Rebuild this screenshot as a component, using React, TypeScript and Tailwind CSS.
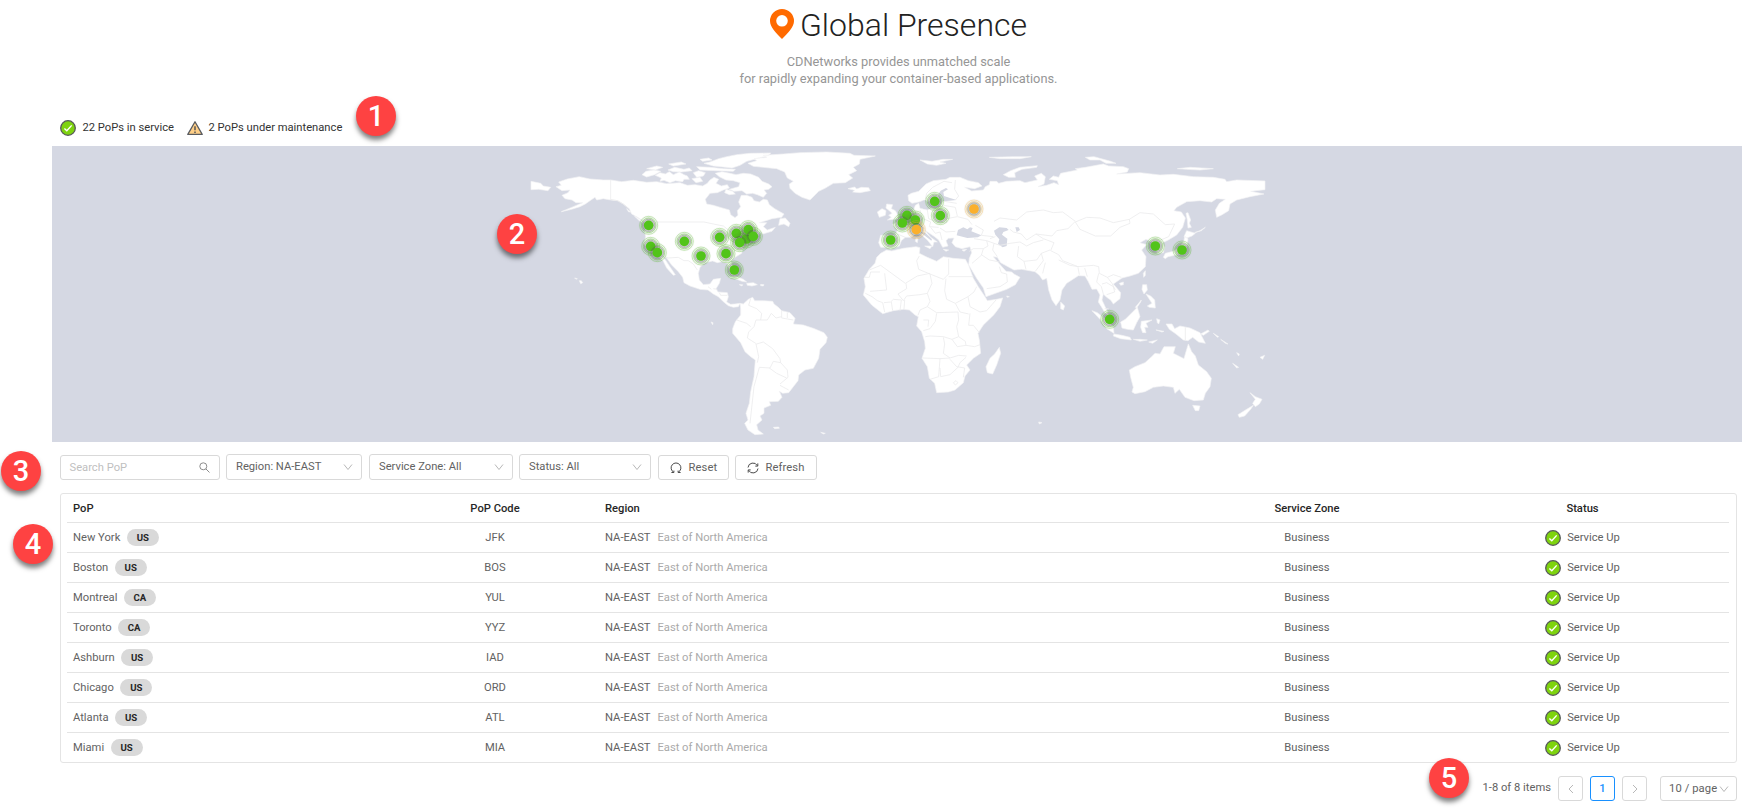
import type { ReactNode } from "react";

type Point = [number, number];

const pops = [
  { name: "New York", country: "US", code: "JFK" },
  { name: "Boston", country: "US", code: "BOS" },
  { name: "Montreal", country: "CA", code: "YUL" },
  { name: "Toronto", country: "CA", code: "YYZ" },
  { name: "Ashburn", country: "US", code: "IAD" },
  { name: "Chicago", country: "US", code: "ORD" },
  { name: "Atlanta", country: "US", code: "ATL" },
  { name: "Miami", country: "US", code: "MIA" },
];

/* Western hemisphere outlines */
const westLand = [
  "M228 140 244 136 236 126 262 117 298 110 330 117 370 120 392 120 425 125 460 121 500 127 530 125 560 131 600 128 622 136 645 134 668 138 682 130 690 120 702 112 716 118 708 130 724 138 742 134 748 144 730 150 712 158 690 160 676 178 680 192 700 196 724 203 748 210 752 224 765 233 774 226 772 212 782 200 776 186 784 166 800 166 816 172 822 182 838 186 850 178 862 180 868 194 884 206 912 222 905 232 876 236 858 242 838 248 860 248 850 260 862 270 886 262 876 274 848 282 840 274 832 290 812 300 800 318 788 326 785 340 765 352 752 365 762 385 766 400 757 406 748 390 742 370 725 365 712 368 698 363 675 368 660 382 655 400 658 420 670 434 690 432 700 418 722 415 718 430 708 446 714 456 742 458 745 470 740 486 752 493 765 492 780 490 775 500 760 502 745 497 730 485 715 470 700 462 684 450 660 448 630 438 612 428 608 412 595 395 575 375 560 354 550 350 568 378 586 404 580 406 560 384 550 364 535 346 515 338 500 325 492 310 497 290 494 275 500 252 482 238 470 230 455 222 448 206 430 192 414 182 392 180 370 176 350 180 345 172 330 182 316 192 300 200 275 208 244 215 280 200 308 188 288 188 276 180 255 176 246 166 264 158 270 150 246 152Z",
  "M804 70 830 62 822 56 860 52 850 46 910 42 960 38 1040 36 1110 40 1122 46 1186 48 1140 58 1138 72 1120 82 1130 92 1106 104 1118 114 1096 128 1060 130 1035 145 1016 154 1006 164 990 180 966 172 945 160 930 145 928 132 940 124 922 114 914 96 890 86 850 82 820 79Z",
  "M690 66 716 56 740 50 770 44 810 40 872 39 866 46 830 56 800 64 780 76 756 84 722 80 700 78 672 70Z",
  "M706 100 726 95 750 100 768 104 790 100 812 102 836 112 846 124 866 132 876 140 866 148 852 150 860 160 850 172 832 164 818 160 800 162 786 152 762 154 748 148 776 140 780 128 760 122 738 120 718 110Z",
  "M526 106 540 98 556 102 568 95 580 104 598 96 612 104 622 108 628 118 612 118 608 125 586 122 570 128 552 121 540 124 544 114Z",
  "M486 104 498 94 522 90 542 94 524 104 500 111Z",
  "M500 86 530 78 548 82 526 90Z",
  "M564 90 584 82 612 88 628 84 636 92 604 96 580 95Z",
  "M566 72 604 66 618 72 580 78Z",
  "M640 98 656 92 676 98 670 108 650 112Z M636 116 660 112 668 124 648 128Z",
  "M650 80 690 82 730 86 766 88 760 94 710 92 660 90Z",
  "M660 58 686 54 696 60 668 64Z",
  "M738 148 758 154 766 162 748 164 734 158Z",
  "M1104 146 1124 141 1130 147 1144 142 1166 143 1171 152 1140 158 1118 156 1124 151Z",
  "M153 124 182 130 190 138 212 142 204 152 176 148 153 149Z",
  "M900 236 916 234 930 250 926 260 912 252 896 256Z",
  "M748 412 766 408 790 418 800 426 786 424 766 416Z M800 430 820 428 832 434 816 438 802 436Z M778 434 788 434 786 438Z M842 433 852 434 850 438 842 437Z",
  "M463 228 480 238 490 248 478 242Z M440 206 452 216 446 216Z",
  "M780 490 790 492 805 478 818 472 824 482 850 482 878 484 882 492 895 502 905 512 930 518 945 535 940 552 970 555 1000 565 1032 578 1042 592 1038 608 1020 628 1016 655 1000 685 975 690 956 705 954 722 940 740 926 758 908 760 898 754 906 772 895 784 868 785 872 796 852 804 852 820 840 828 846 840 830 854 834 870 850 882 825 884 804 870 794 850 804 840 798 820 808 790 812 755 822 710 826 660 812 650 795 635 782 608 758 580 758 566 766 545 782 525 782 505Z",
  "M298 422 304 422 308 428 302 431Z M284 414 292 416 288 418Z M880 862 896 861 898 865 884 866Z M1022 877 1036 880 1030 882Z M693 546 699 548 698 554Z",
];

const westBorders = [
  "M392 120V180M392 178 412 182 430 192 446 206",
  "M530 246H672L700 252 730 258 745 270",
  "M540 346 565 354 595 352 612 362 625 362 640 372 652 390",
  "M812 476 806 496 830 506 845 520 842 540 828 540 822 560 806 576 802 594 830 612 850 606 878 626 900 656 902 668 922 690 924 712 900 732",
  "M770 540 800 550 812 560 M828 612 836 650 832 668 M838 682 822 740 810 850 M868 684 890 700 920 714 M838 682 870 684 880 664 902 668 M842 540 862 540 874 520 888 534 905 530 M905 512V534 M922 518V534 M905 534 940 540 M900 736 926 750",
  "M684 440 694 448 M700 446 712 448 M718 458 722 466 742 466",
];

/* Eastern hemisphere outlines */
const eastLand = [
  "M204 166 214 160 236 154 258 132 280 122 318 118 330 112 360 112 385 122 415 128 426 138 404 146 374 142 395 153 430 150 436 140 448 134 450 124 470 124 476 130 500 124 540 122 555 128 592 120 584 108 604 100 616 110 612 132 594 140 620 136 642 128 656 134 652 122 628 118 640 108 656 112 662 100 712 90 706 86 736 82 790 72 806 78 850 80 866 86 862 96 830 102 900 98 960 105 1000 103 1060 110 1120 112 1155 118 1160 125 1190 120 1275 123 1275 149 1232 154 1272 162 1230 170 1190 180 1170 192 1166 212 1145 225 1130 232 1126 210 1138 190 1156 178 1130 176 1115 186 1080 182 1040 185 1010 202 1002 212 1024 216 1036 234 1028 262 1010 285 985 300 968 308 974 322 970 338 952 340 944 318 935 306 918 298 900 308 920 314 905 330 918 350 916 380 895 400 870 408 846 414 830 425 820 432 842 458 840 476 820 492 812 480 800 472 790 462 786 480 800 510 808 528 796 520 784 500 775 486 780 465 770 447 756 448 745 425 735 408 715 407 700 417 680 430 666 450 660 480 648 497 636 480 626 450 620 415 608 420 598 406 585 395 545 388 522 390 500 378 482 368 472 352 460 350 482 376 498 394 515 396 522 402 540 412 526 434 500 448 438 470 430 444 410 415 386 374 388 355 395 338 390 320 366 326 346 320 336 308 342 294 325 295 318 302 324 318 308 322 296 300 284 290 266 278 254 270 272 292 292 306 282 306 278 320 262 300 245 285 230 280 212 292 196 292 184 302 178 318 152 328 138 322 122 322 116 308 122 286 166 284 172 270 158 254 176 242 190 232 202 220 220 212 226 196 236 190 240 205 262 210 285 200 300 196 252 180 236 186 216 190 206 182Z",
  "M122 340 140 330 155 333 190 325 228 320 240 323 238 340 262 352 290 364 310 350 340 355 376 358 386 376 400 415 415 440 436 472 442 482 470 478 488 474 480 500 462 524 430 555 414 580 418 600 422 640 400 655 380 675 390 690 375 708 370 728 345 750 325 756 290 758 284 730 268 715 262 680 246 655 256 625 254 605 245 575 230 558 235 530 225 525 208 510 190 508 160 512 128 521 95 495 70 465 76 440 72 415 88 388 105 370 110 352Z",
  "M478 622 482 640 470 675 458 702 442 698 438 680 450 655 464 642Z",
  "M868 690 885 680 915 668 935 650 945 640 960 642 972 620 1006 620 1000 640 1032 656 1038 635 1045 612 1055 635 1066 648 1075 675 1100 695 1114 715 1110 740 1096 760 1090 780 1062 782 1035 772 1018 748 1005 760 1000 742 970 738 940 742 915 755 885 761 876 756 880 742 872 712Z",
  "M1058 796 1080 798 1076 812 1066 812Z",
  "M1230 758 1246 770 1266 778 1258 792 1246 800 1238 790 1246 778Z M1240 796 1232 808 1214 828 1198 832 1194 824 1220 808Z",
  "M756 512 772 518 800 540 820 562 822 580 800 566 780 538Z",
  "M822 582 846 586 870 592 874 600 842 596 820 588Z M880 598 900 598 922 600 900 604Z M926 606 952 600 938 610Z",
  "M842 546 856 538 880 514 892 502 896 516 900 530 890 548 880 570 862 568 846 564Z",
  "M904 544 936 540 918 550 924 562 914 562 918 578 908 578 902 562Z",
  "M978 552 996 552 1004 566 1020 558 1050 564 1080 578 1088 594 1096 610 1076 606 1058 592 1044 602 1030 600 1008 582 988 568Z M1082 582 1104 570 1108 574 1090 586Z",
  "M950 536 960 540 956 552 952 548Z M948 570 972 574 966 576Z M1120 580 1136 590 1132 592Z M1142 598 1164 612 1156 610Z M1178 670 1196 682 1190 684Z M1190 638 1198 642 1196 648Z M1260 652 1274 646 1268 658Z",
  "M908 434 920 434 922 450 912 462 906 448Z M918 462 932 468 944 480 946 504 928 502 922 498 936 490Z M886 502 904 480 902 486 890 504Z",
  "M910 400 916 392 916 406 911 412Z M838 430 850 426 850 434 842 436Z M662 486 674 498 670 510 662 506Z",
  "M970 352 976 340 1000 334 1020 320 1032 302 1034 288 1044 296 1040 320 1030 340 1004 346 984 350 976 356Z M1032 290 1040 272 1066 280 1056 288 1040 294Z",
  "M1038 220 1044 218 1052 240 1048 250 1054 262 1044 264 1042 240Z M1064 278 1080 272 1096 262 1084 272Z",
  "M140 192 158 194 154 206 166 212 174 226 176 236 142 240 154 232 146 226 156 220 148 212 138 204Z M112 216 126 206 138 212 136 226 118 232Z",
  "M490 104 512 92 540 82 592 77 590 82 546 88 524 98 526 112 506 112Z",
  "M240 60 276 64 310 58 338 58 300 66 318 70 290 76 262 72Z M448 52 520 50 574 50 540 56 480 56Z M736 52 762 50 812 64 828 70 798 70 780 60 750 60Z M1012 86 1050 82 1120 86 1080 90 1040 88Z",
  "M228 294 234 296 232 308 226 304Z M254 318 276 318 270 326Z M310 328 326 330 318 334Z M366 330 380 328 372 334Z",
  "M596 846 606 848 598 852Z M500 468 508 470 502 472Z",
];

const eastBorders = [
  "M122 376 196 430 232 408 270 400M122 376 88 390M134 400 140 450 90 454M72 412 88 412 92 396 120 396M238 348 230 362 236 388 270 402 310 418 318 410 326 402V356M326 410H400M270 402 276 430 262 460 240 464 200 468 190 482 174 462 200 446 198 430M318 416 314 452 320 478 346 490 384 470 402 456 410 440M384 470 390 500 420 516 440 512 468 480M390 520 386 556 400 556 418 578M346 490 360 516 386 522",
  "M76 460 96 470 112 482 128 488 134 516M132 488 152 486 160 478 184 480 180 512M154 486 158 512M194 480 192 508M262 460 270 484 262 500 240 510 234 526M262 500 290 518 354 516 356 540 350 560 356 590 336 598 310 590 270 588 256 590M290 520 286 544 270 566 250 572M250 540H266L264 560",
  "M248 654 300 656 330 654 356 646 380 648M310 592 314 612 310 640 330 654M336 598 352 620 378 616 376 604 356 590M378 616 404 620 420 614M300 656 296 710 270 718M300 684 302 710 330 704 354 682 360 668 378 652M330 658 350 680 374 684M374 684 370 712M340 728 348 722 354 728 346 735Z",
  "M150 286 144 320M172 282 196 292M184 232 210 256 206 280M214 220 206 240 226 256M240 210 248 236 230 252 254 266M250 236 272 246 268 260 296 262M262 210 266 236 290 246 320 248M290 206 316 214 320 248M272 262 286 280 300 276 306 300M300 264 318 276 346 274M320 236 352 230 384 238 396 254M310 196 346 202 352 228M314 184 350 190M346 180 356 168 344 148 346 120M256 178 260 160 278 142 312 124 336 128",
  "M462 244 480 234 530 240 560 216 610 210 640 218 668 216 706 244 684 266 650 272 636 288 588 282 560 300 544 282 520 276 510 268M706 246 740 232 780 234 820 248 868 238 870 250 840 262 812 288 766 288 720 268 706 246M868 238 900 218 940 222 976 254 1004 252 986 290 962 300M588 282 610 296 642 308 632 332 656 344 668 362 714 380 760 376 776 380 778 400 802 412 820 404 844 412M656 360 690 376 716 380M714 382 718 404M734 384 742 410M776 400 770 426 784 440 790 462M786 432 800 428 820 440 824 456 800 464M802 412 816 430 826 450",
  "M402 296 440 302 462 310 480 316 510 310 540 306 560 318 580 308 610 300M440 302 444 318 430 326 400 326 388 334M430 326 424 346 396 370M424 344 448 360 480 366M462 310 458 330 472 350M536 318 532 350 552 364 590 360 604 340 630 330M552 364 558 388M604 340 610 362 586 394M616 368 608 400M500 402 502 426 480 440 440 446M500 402 484 398 478 380M406 256 430 270 424 286 460 290M450 296 466 290M1036 562V600M794 506 806 506",
];

const seas = [
  "M298 200 308 184 328 182 350 180 330 174 312 168 310 156 324 148 318 144 302 152 294 164 298 176 286 188 276 198 262 192 258 180 250 182 244 196 250 206 280 204Z",
  "M350 286 354 270 370 262 382 268 390 262 398 264 394 274 424 286 414 292 382 294Z",
  "M462 272 478 262 500 264 506 270 490 276 486 284 502 296 500 318 488 322 474 312 478 298 466 284Z",
  "M526 262 536 262 540 270 530 276Z",
  "M240 276 256 278 276 298 274 302Z",
];

const greenWest: Point[] = [
  [506, 256], [512, 319], [532, 338], [613, 304], [663, 348], [719, 292], [738, 341],
  [763, 390], [769, 280], [799, 297], [805, 269], [820, 289], [779, 308],
];
const greenEast: Point[] = [
  [284, 184], [301, 227], [201, 226], [226, 240], [187, 249], [152, 300], [946, 318],
  [1026, 330], [809, 538],
];
const orangeEast: Point[] = [[402, 207], [229, 269]];

function Marker({ at, color }: { at: Point; color: string }) {
  return (
    <g transform={`translate(${at[0]} ${at[1]})`} fill="none">
      <circle r="32" fill="url(#halo)" />
      <circle r="27" stroke={color} strokeWidth="2" strokeOpacity="0.45" />
      <circle r="22" stroke={color} strokeWidth="2" strokeOpacity="0.6" />
      <circle r="18.5" stroke="#5d5d5d" strokeWidth="2" strokeOpacity="0.45" />
      <circle r="14.5" fill={color} />
    </g>
  );
}

function WorldMap() {
  return (
    <svg className="block h-[296px] w-full" viewBox="52 146 1690 296" preserveAspectRatio="none">
      <defs>
        <radialGradient id="halo">
          <stop offset="0" stopColor="#203020" stopOpacity="0.45" />
          <stop offset="0.45" stopColor="#304030" stopOpacity="0.3" />
          <stop offset="0.7" stopColor="#405040" stopOpacity="0.1" />
          <stop offset="1" stopColor="#405040" stopOpacity="0" />
        </radialGradient>
      </defs>
      <rect x="52" y="146" width="1690" height="296" fill="#d5d8e3" />
      <g transform="translate(840 140) scale(0.33333)" strokeLinejoin="round">
        <path d={eastLand.join(" ")} fill="#fff" stroke="#f3f3f5" strokeWidth="2" />
        <path d={seas.join(" ")} fill="#d5d8e3" />
        <path d={eastBorders.join(" ")} fill="none" stroke="#ececed" strokeWidth="2.5" />
      </g>
      <g transform="translate(480 140) scale(0.33333)" strokeLinejoin="round">
        <path d={westLand.join(" ")} fill="#fff" stroke="#f3f3f5" strokeWidth="2" />
        <path d={westBorders.join(" ")} fill="none" stroke="#ececed" strokeWidth="2.5" />
        {greenWest.map((p) => <Marker key={p.join()} at={p} color="#52c41a" />)}
      </g>
      <g transform="translate(840 140) scale(0.33333)">
        {greenEast.map((p) => <Marker key={p.join()} at={p} color="#52c41a" />)}
        {orangeEast.map((p) => <Marker key={p.join()} at={p} color="#fbb02d" />)}
      </g>
    </svg>
  );
}

function CheckIcon() {
  return (
    <svg className="h-4 w-4 shrink-0" viewBox="0 0 16 16" fill="none">
      <circle cx="8" cy="8" r="7.3" fill="#7ed30f" stroke="#56585a" strokeWidth="1.3" />
      <path d="M4.4 8.5 6.8 10.8 11.7 5.4" stroke="#fff" strokeWidth="1.4" />
    </svg>
  );
}

function WarningIcon() {
  return (
    <svg className="h-4 w-4 shrink-0" viewBox="0 0 16 16" fill="none">
      <path d="M8 1.7 15.2 14.4H.8Z" fill="#ffcf87" stroke="#5a5c60" strokeWidth="1.3" strokeLinejoin="round" />
      <path d="M8 6.2V10.2M8 11.4V12.9" stroke="#4c4d50" strokeWidth="1.4" />
    </svg>
  );
}

function Chevron({ d = "M1 2.5 5 7.5 9 2.5" }: { d?: string }) {
  return (
    <svg className="h-[10px] w-[10px] shrink-0" viewBox="0 0 10 10" fill="none">
      <path d={d} stroke="#b8b8b8" strokeWidth="1" />
    </svg>
  );
}

function Select({ label, className }: { label: string; className: string }) {
  return (
    <div className={`flex h-[26px] items-center justify-between rounded-[3px] border border-[#d9d9d9] pr-2 pl-[9px] ${className}`}>
      <span>{label}</span>
      <Chevron />
    </div>
  );
}

function Button({ icon, label, className }: { icon: ReactNode; label: string; className: string }) {
  return (
    <button className={`mt-px flex h-[25px] items-center rounded-[3px] border border-[#d9d9d9] pl-[11px] ${className}`}>
      {icon}
      <span className="ml-[6.5px] pt-[2px] tracking-[0.1px]">{label}</span>
    </button>
  );
}

function Badge({ n, className }: { n: number; className: string }) {
  return (
    <div className={`absolute flex h-10 w-10 items-center justify-center rounded-full bg-[#fe4242] pt-px text-[29px] leading-none font-medium text-white shadow-[0_4px_5px_rgba(0,0,0,0.5)] ${className}`}>
      {n}
    </div>
  );
}

export default function App() {
  return (
    <div className="relative h-[810px] w-[1742px] overflow-hidden bg-white font-['Roboto',sans-serif] text-[11.2px] text-[#626262]">
      <main className="ml-[52px] flex flex-col">
        <header className="flex h-[118px] flex-col items-center pl-[3px]">
          <h1 className="mt-[6px] flex h-[38px] items-center text-[32px] font-light text-[#222]">
            <svg className="-mt-[2px] mr-[6px] h-[30px] w-6" viewBox="0 0 24 30">
              <path fillRule="evenodd" fill="#ff6a00" d="M12 0A12 12 0 0 1 24 12C24 18 18 24 12 30 6 24 0 18 0 12A12 12 0 0 1 12 0ZM12 6A5.8 5.8 0 1 0 12 17.6 5.8 5.8 0 0 0 12 6Z" />
            </svg>
            Global Presence
          </h1>
          <p className="mt-[9px] text-center text-[12.8px] leading-[17px] text-[#969696]">
            CDNetworks provides unmatched scale
            <br />
            for rapidly expanding your container-based applications.
          </p>
        </header>
        <div className="flex h-7 items-start pt-[2px] pl-2 text-[#333]">
          <CheckIcon />
          <span className="ml-[6.5px] leading-[15px]">22 PoPs in service</span>
          <span className="w-[12.5px]" />
          <WarningIcon />
          <span className="ml-[6px] leading-[15px]">2 PoPs under maintenance</span>
        </div>
        <WorldMap />
        <div className="mt-3 ml-2 flex h-[26px]">
          <div className="mt-px flex h-[25px] w-40 items-center justify-between rounded-[3px] border border-[#d9d9d9] pr-[9px] pl-[8.5px] text-[#bfbfbf]">
            <span className="pt-[2px]">Search PoP</span>
            <svg className="h-[11px] w-[11px]" viewBox="0 0 11 11" fill="none" stroke="#8c8c8c">
              <circle cx="4.3" cy="4.3" r="3.5" />
              <path d="M6.9 6.9 10.5 10.5" />
            </svg>
          </div>
          <Select label="Region: NA-EAST" className="ml-[6px] w-[136px]" />
          <Select label="Service Zone: All" className="ml-[7px] w-36" />
          <Select label="Status: All" className="ml-[6px] w-[132px]" />
          <Button
            label="Reset"
            className="ml-[7px] w-[71px]"
            icon={
              <svg className="h-3 w-3" viewBox="0 0 12 12" fill="none" stroke="#4b4b4b">
                <path d="M3.7 10.2A4.9 4.9 0 1 1 8.3 10.2M1.4 10.5H3.9V8.6M10.6 10.5H8.1V8.6" />
              </svg>
            }
          />
          <Button
            label="Refresh"
            className="ml-[6px] w-[82px]"
            icon={
              <svg className="h-3 w-3" viewBox="0 0 12 12" fill="none" stroke="#4b4b4b">
                <path d="M1 5.5A5 5 0 0 1 10.4 3.7M10.8 1.4V4.1H8.3M11 6.5A5 5 0 0 1 1.6 8.3M1.2 10.6V7.9H3.7" />
              </svg>
            }
          />
        </div>
        <section className="mt-[13px] ml-2 w-[1677px] rounded-[3px] border border-[#e4e4e4] pr-[7px] pl-[6px]">
          <div className="grid h-[29px] grid-cols-[325px_206px_580px_258px_293px] items-center border-b border-[#e4e4e4] pt-px leading-4 font-medium text-[#262626]">
            <div className="pl-[6px]">PoP</div>
            <div className="text-center">PoP Code</div>
            <div className="pl-[7px]">Region</div>
            <div className="text-center">Service Zone</div>
            <div className="text-center">Status</div>
          </div>
          {pops.map((p) => (
            <div key={p.code} className="grid h-[30px] grid-cols-[325px_206px_580px_258px_293px] items-center border-b border-[#e4e4e4] leading-4 last:h-[29px] last:border-b-0">
              <div className="flex items-center pl-[6px]">
                <span>{p.name}</span>
                <span className="ml-[6.5px] flex h-[17px] w-8 items-center justify-center rounded-full bg-[#d9d9d9] text-[9.6px] font-bold text-[#262626]">{p.country}</span>
              </div>
              <div className="text-center">{p.code}</div>
              <div className="pl-[7px]">
                NA-EAST<span className="ml-[7px] text-[#aaa]">East of North America</span>
              </div>
              <div className="text-center">Business</div>
              <div className="flex items-center justify-center">
                <CheckIcon />
                <span className="ml-[6px]">Service Up</span>
              </div>
            </div>
          ))}
        </section>
        <nav className="mt-[13px] flex h-[25px] items-center justify-end pr-[5px]">
          <span className="mr-[7px]">1-8 of 8 items</span>
          <span className="flex h-[25px] w-[25px] items-center justify-center rounded-[3px] border border-[#d9d9d9]"><Chevron d="M7 1 3 5 7 9" /></span>
          <span className="ml-[7px] flex h-[25px] w-[25px] items-center justify-center rounded-[3px] border border-[#1890ff] pt-px font-medium text-[#1890ff]">1</span>
          <span className="ml-[7px] flex h-[25px] w-[25px] items-center justify-center rounded-[3px] border border-[#d9d9d9]"><Chevron d="M3 1 7 5 3 9" /></span>
          <span className="ml-[13px] flex h-[25px] w-[77px] items-center rounded-[3px] border border-[#d9d9d9] pl-2 whitespace-nowrap">
            <span className="mr-[2px] pt-px tracking-[0.1px]">10 / page</span>
            <Chevron />
          </span>
        </nav>
      </main>
      <Badge n={1} className="top-24 left-[356px]" />
      <Badge n={2} className="top-[214px] left-[497px]" />
      <Badge n={3} className="top-[451px] left-px" />
      <Badge n={4} className="top-[524px] left-[13px]" />
      <Badge n={5} className="top-[758px] left-[1429px]" />
    </div>
  );
}
